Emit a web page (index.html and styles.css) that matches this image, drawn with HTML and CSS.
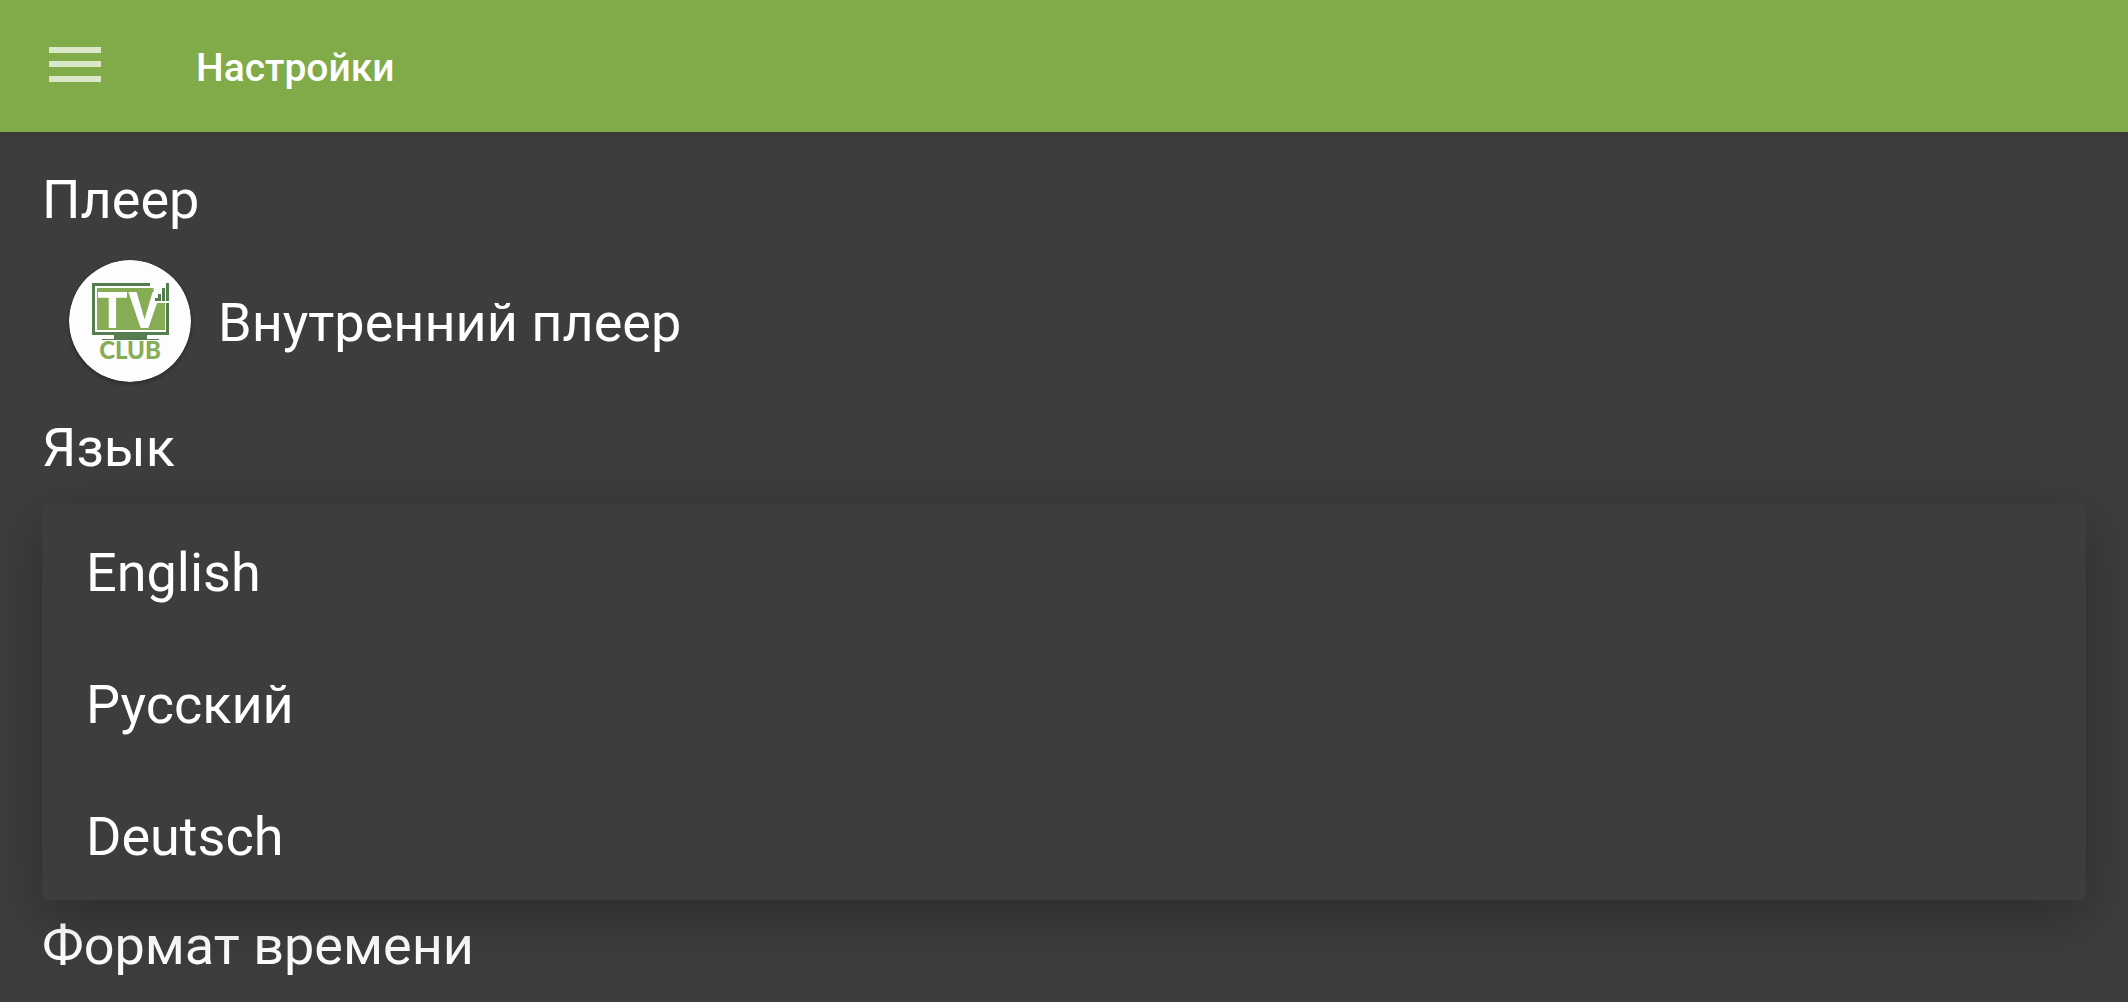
FILE: index.html
```
<!DOCTYPE html>
<html lang="ru">
<head>
    <meta charset="UTF-8">
    <meta name="viewport" content="width=device-width, initial-scale=1.0">
    <title>Настройки</title>
    <link rel="stylesheet" href="styles.css">
</head>
<body>
    <header class="toolbar">
        <button type="button" class="menu-button" aria-label="Меню">
            <svg class="menu-icon" viewBox="0 0 52 36" aria-hidden="true">
                <path d="M0 0h52v6H0zM0 14h52v6H0zM0 29h52v6H0z"/>
            </svg>
        </button>
        <h1>Настройки</h1>
    </header>

    <main class="settings">
        <h2>Плеер</h2>
        <button type="button" class="player">
            <svg class="player-logo" viewBox="0 0 122 122" aria-hidden="true">
                <circle cx="61" cy="61" r="61" fill="#fdfdfd"/>
                <!-- экран -->
                <path d="M28 28h68v42H28z" fill="#86ac55"/>
                <text class="logo-tv" x="28" y="68">TV</text>
                <path d="M84 24h16v19H86z" fill="#fdfdfd"/>
                <path d="M23 23h58v3H26v46h71V43h3v32H23z" fill="#567d50"/>
                <!-- подставка -->
                <path d="M45 75h33v4h12v1H33v-1h12z" fill="#567d50"/>
                <!-- сигнал -->
                <path d="M86 38h3v3h-3zM89 34h3v7h-3zM93 28h3v13h-3zM97 23h3v18h-3z" fill="#567d50"/>
                <text class="logo-club" x="61" y="99">CLUB</text>
            </svg>
            <span>Внутренний плеер</span>
        </button>

        <h2 id="language-label">Язык</h2>
        <div class="dropdown" role="listbox" aria-labelledby="language-label">
            <button type="button" role="option">English</button>
            <button type="button" role="option">Русский</button>
            <button type="button" role="option">Deutsch</button>
        </div>

        <h2>Формат времени</h2>
    </main>
</body>
</html>
```
FILE: styles.css
```
body {
    margin: 0;
    background-color: #3d3d3d;
    font-family: Roboto, sans-serif;
    font-size: 54px;
    line-height: 64px;
    color: #fff;
}

button {
    border: none;
    background: none;
    font: inherit;
    color: inherit;
    text-align: left;
    cursor: pointer;
}

.toolbar {
    position: relative;
    display: flex;
    align-items: center;
    gap: 93px;
    height: 132px;
    padding: 0 47px;
    background-color: #81ab49;
    box-shadow: 0 2px 16px rgba(0, 0, 0, 0.1);
}

.menu-button {
    padding: 0 2px 2px;
    line-height: 0;
}

.menu-icon {
    width: 52px;
    height: 36px;
    fill: #dae7c8;
}

.toolbar h1 {
    margin: 0;
    padding-top: 4px;
    font-size: 39px;
    font-weight: 500;
}

.settings {
    padding: 36px 42px 24px;
}

.settings h2 {
    margin: 0;
    font-size: 54px;
    font-weight: 400;
}

.player {
    display: flex;
    align-items: center;
    gap: 27px;
    width: 100%;
    padding: 28px 27px 34px;
}

.player span {
    padding-top: 4px;
}

.player-logo {
    width: 122px;
    height: 122px;
    border-radius: 50%;
    box-shadow: 0 2px 4px rgba(0, 0, 0, 0.3);
}

.logo-tv {
    font: 700 50px Roboto, sans-serif;
    fill: #fdfdfd;
}

.logo-club {
    font: 900 24px Lato, sans-serif;
    fill: #86ac55;
    text-anchor: middle;
}

.dropdown {
    position: relative;
    display: flex;
    flex-direction: column;
    margin: 24px 0 14px;
    border-radius: 6px;
    background-color: #3d3d3d;
    box-shadow: 0 16px 56px rgba(0, 0, 0, 0.28);
}

.dropdown button {
    padding: 37px 44px 31px;
}
```
